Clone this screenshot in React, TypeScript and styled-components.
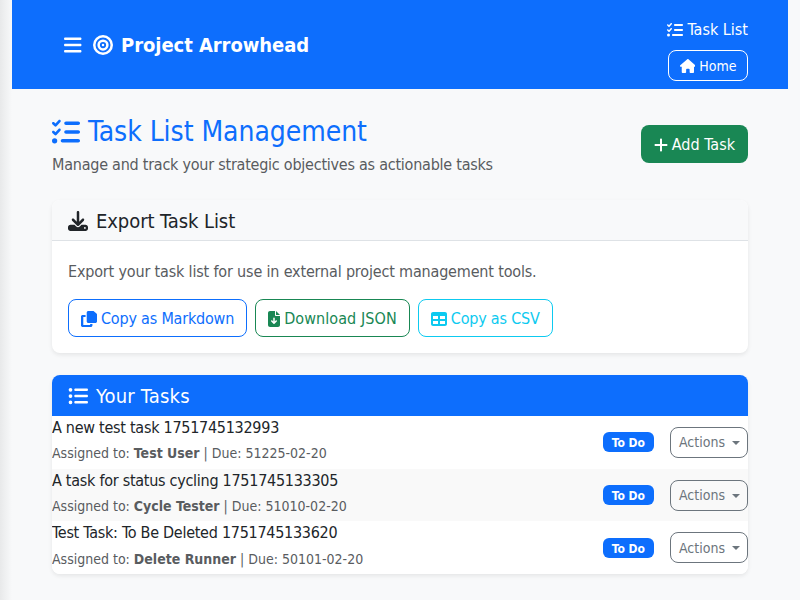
import React from 'react';
import styled, { createGlobalStyle } from 'styled-components';
import {
  FaBars, FaBullseye, FaCopy, FaDownload, FaFileArrowDown, FaHouse, FaListCheck, FaListUl,
  FaPlus, FaTable,
} from 'react-icons/fa6';

const GlobalStyle = createGlobalStyle`
  html, body { margin: 0; padding: 0; }
  body {
    background: linear-gradient(90deg, #e8e9ea 0, #f8f9fa 12px);
    color: #212529;
    font-family: "DejaVu Sans", sans-serif;
    font-stretch: condensed;
    font-size: 16px;
    line-height: 1.5;
    overflow: hidden;
  }
  svg {
    width: 1em;
    height: 1em;
    flex: none;
  }
`;

// these glyphs are not square, the box has to follow their real width
const BarsIcon = styled(FaBars)`
  width: 0.875em;
  margin-right: 3.5px;
`;
const HouseIcon = styled(FaHouse)`
  width: 1.125em;
`;
const PlusIcon = styled(FaPlus)`
  width: 0.875em;
`;
const FileIcon = styled(FaFileArrowDown)`
  width: 0.75em;
`;

const Page = styled.div`
  margin: 0 12px;
  height: 600px;
  overflow: hidden;
`;

const Header = styled.header`
  background: #0d6efd;
  color: #fff;
  height: 89px;
  box-sizing: border-box;
  padding: 0 40px 0 52px;
  display: flex;
  justify-content: space-between;
  align-items: center;
`;

const Brand = styled.div`
  display: flex;
  align-items: center;
  font-size: 20px;
  font-weight: 700;
  letter-spacing: -0.05px;
  gap: 8px;
`;

const HeaderRight = styled.div`
  display: flex;
  flex-direction: column;
  align-items: flex-end;
  gap: 8px;
  margin-top: 10px;
`;

const NavLink = styled.div`
  display: flex;
  align-items: center;
  gap: 4px;
`;

const HomeButton = styled.div`
  display: flex;
  align-items: center;
  justify-content: center;
  gap: 4px;
  width: 80px;
  height: 31px;
  box-sizing: border-box;
  padding-top: 1px;
  border: 1px solid #fff;
  border-radius: 8px;
  font-size: 14px;
`;

const Main = styled.main`
  padding: 24px 40px 0;
`;

const TitleRow = styled.div`
  display: flex;
  justify-content: space-between;
  align-items: center;
  margin-bottom: 23px;
`;

const Title = styled.h1`
  margin: 0 0 2px;
  display: flex;
  align-items: center;
  gap: 8px;
  color: #0d6efd;
  font-size: 28px;
  font-weight: 400;
  line-height: 38px;
  letter-spacing: -0.05px;
`;

const Subtitle = styled.p`
  margin: 0;
  color: #595c5f;
  letter-spacing: -0.24px;
`;

const AddButton = styled.div`
  display: flex;
  align-items: center;
  gap: 4px;
  height: 38px;
  box-sizing: border-box;
  padding: 1px 13px 0;
  margin-bottom: 2px;
  background: #198754;
  color: #fff;
  border-radius: 8px;
`;

const Card = styled.section`
  background: #fff;
  border-radius: 8px;
  box-shadow: 0 2px 4px rgba(0, 0, 0, 0.08);
  margin-bottom: 22px;
  overflow: hidden;
`;

const CardHeader = styled.div<{ $primary?: boolean }>`
  display: flex;
  align-items: center;
  gap: 8px;
  height: 41px;
  box-sizing: border-box;
  padding: 1px 16px 0;
  font-size: 20px;
  letter-spacing: ${p => (p.$primary ? '0.2px' : '-0.07px')};
  background: ${p => (p.$primary ? '#0d6efd' : '#f8f9fa')};
  color: ${p => (p.$primary ? '#fff' : '#212529')};
  border-bottom: 1px solid ${p => (p.$primary ? '#0d6efd' : '#dee2e6')};
`;

const CardBody = styled.div`
  padding: 19px 16px 16px;
`;

const Muted = styled.p`
  margin: 0 0 15px;
  color: #595c5f;
  letter-spacing: -0.17px;
`;

const ButtonRow = styled.div`
  display: flex;
  gap: 8px;
`;

const OutlineButton = styled.div<{ $color: string; $tracking: number }>`
  display: flex;
  align-items: center;
  gap: 4px;
  height: 38px;
  box-sizing: border-box;
  padding: 1px 12px 0;
  border: 1px solid ${p => p.$color};
  color: ${p => p.$color};
  border-radius: 8px;
  letter-spacing: ${p => p.$tracking}px;
`;

const TaskRow = styled.div<{ $striped?: boolean }>`
  display: flex;
  justify-content: space-between;
  align-items: center;
  height: 52.7px;
  background: ${p => (p.$striped ? '#f9f9f9' : '#fff')};
`;

const TaskText = styled.div`
  align-self: flex-start;
`;

const TaskName = styled.div`
  line-height: 24px;
  letter-spacing: -0.27px;
`;

const TaskMeta = styled.div`
  margin-top: 0.35px;
  font-size: 14px;
  color: #595c5f;
  line-height: 26px;
  b { font-weight: 700; }
`;

const TaskActions = styled.div`
  display: flex;
  align-items: center;
  gap: 16px;
`;

const Badge = styled.span`
  background: #0d6efd;
  color: #fff;
  font-size: 12px;
  font-weight: 700;
  line-height: 1;
  padding: 5px 9px 3px;
  border-radius: 6px;
`;

const ActionsButton = styled.div`
  display: flex;
  align-items: center;
  gap: 7px;
  width: 78px;
  height: 31px;
  box-sizing: border-box;
  padding: 1px 0 0 8px;
  border: 1px solid #6c757d;
  border-radius: 8px;
  color: #6c757d;
  font-size: 14px;
`;

const Caret = styled.span`
  width: 0;
  height: 0;
  border-top: 4.2px solid currentColor;
  border-left: 4.2px solid transparent;
  border-right: 4.2px solid transparent;
`;

const tasks = [
  { name: 'A new test task 1751745132993', who: 'Test User', due: '51225-02-20' },
  { name: 'A task for status cycling 1751745133305', who: 'Cycle Tester', due: '51010-02-20' },
  { name: 'Test Task: To Be Deleted 1751745133620', who: 'Delete Runner', due: '50101-02-20' },
];

export default function App() {
  return (
    <Page>
      <GlobalStyle />
      <Header>
        <Brand>
          <BarsIcon />
          <FaBullseye />
          Project Arrowhead
        </Brand>
        <HeaderRight>
          <NavLink><FaListCheck /> Task List</NavLink>
          <HomeButton><HouseIcon /> Home</HomeButton>
        </HeaderRight>
      </Header>
      <Main>
        <TitleRow>
          <div>
            <Title><FaListCheck /> Task List Management</Title>
            <Subtitle>Manage and track your strategic objectives as actionable tasks</Subtitle>
          </div>
          <AddButton><PlusIcon /> Add Task</AddButton>
        </TitleRow>
        <Card>
          <CardHeader><FaDownload /> Export Task List</CardHeader>
          <CardBody>
            <Muted>Export your task list for use in external project management tools.</Muted>
            <ButtonRow>
              <OutlineButton $color="#0d6efd" $tracking={-0.2}><FaCopy preserveAspectRatio="none" /> Copy as Markdown</OutlineButton>
              <OutlineButton $color="#198754" $tracking={0.08}><FileIcon /> Download JSON</OutlineButton>
              <OutlineButton $color="#0dcaf0" $tracking={-0.2}><FaTable /> Copy as CSV</OutlineButton>
            </ButtonRow>
          </CardBody>
        </Card>
        <Card>
          <CardHeader $primary><FaListUl /> Your Tasks</CardHeader>
          {tasks.map((t, i) => (
            <TaskRow key={t.name} $striped={i === 1}>
              <TaskText>
                <TaskName>{t.name}</TaskName>
                <TaskMeta>Assigned to: <b>{t.who}</b> | Due: {t.due}</TaskMeta>
              </TaskText>
              <TaskActions>
                <Badge>To Do</Badge>
                <ActionsButton>Actions <Caret /></ActionsButton>
              </TaskActions>
            </TaskRow>
          ))}
        </Card>
      </Main>
    </Page>
  );
}
